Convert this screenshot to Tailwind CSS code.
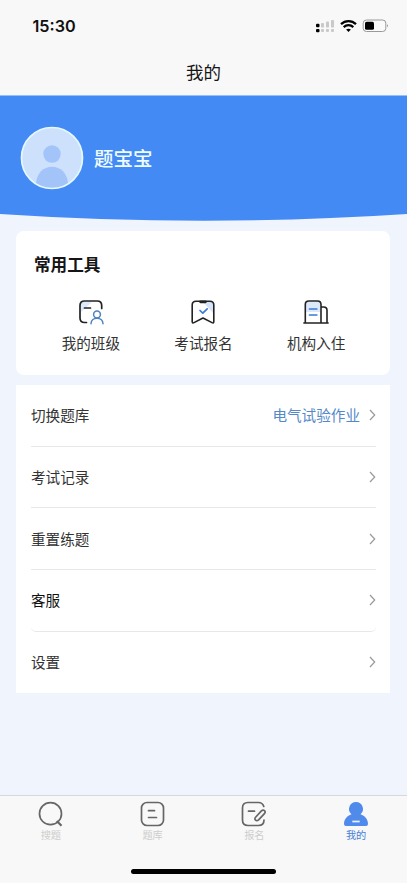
<!DOCTYPE html>
<html lang="zh-CN">
<head>
<meta charset="utf-8">
<meta name="viewport" content="width=device-width, initial-scale=1">
<title>我的</title>
<script src="https://cdn.jsdelivr.net/npm/@tailwindcss/browser@4"></script>
</head>
<body class="font-['Noto_Sans_CJK_SC',sans-serif] bg-[#f0f4fd]">
<div class="w-[407px] h-[883px] flex flex-col overflow-hidden bg-[#f0f4fd]">
  <header class="h-[95px] shrink-0 bg-[#f8f8f8]">
    <div class="h-[52px] flex items-center justify-between pl-[32.500px] pr-[18px]">
      <span class="font-['Inter',sans-serif] font-semibold text-[16.200px] leading-5 text-[#111]">15:30</span>
      <div class="flex items-center gap-[5px]">
        <svg class="w-[20px] h-[14px]" viewBox="0 0 20 14">
          <g fill="#c9c9c9"><rect x="6" y="4" width="3" height="4.5" rx=".8"/><rect x="11" y="2.5" width="3" height="6" rx=".8"/><rect x="16" y="1" width="3" height="7.5" rx=".8"/><rect x="6" y="10" width="3" height="3" rx="1"/><rect x="11" y="10" width="3" height="3" rx="1"/><rect x="16" y="10" width="3" height="3" rx="1"/></g>
          <g fill="#000"><rect x="1" y="4.8" width="3.5" height="3.5" rx="1"/><rect x="1" y="10" width="3.5" height="3.2" rx="1"/></g>
        </svg>
        <svg class="w-[17px] h-[14px]" viewBox="0 0 17 14" fill="none" stroke="#000" stroke-width="2.2">
          <path d="M1 5.1C5.2 1 11.8 1 16 5.1"/><path d="M3.7 8.1c2.7-2.6 6.9-2.6 9.6 0"/><path d="M6.1 10.6c1.4-1.2 3.4-1.2 4.8 0L8.500 13z" fill="#000" stroke="none"/>
        </svg>
        <svg class="w-[27px] h-[14px]" viewBox="0 0 27 14">
          <rect x="1.200" y="1" width="22.600" height="11.500" rx="3.200" fill="#fbfbfb" stroke="#999"/><rect x="3" y="2.800" width="9" height="8" rx="1.600"/><path d="M25 5v3.600q1.600-1.800 0-3.600" fill="#777"/>
        </svg>
      </div>
    </div>
    <h1 class="h-10 text-center text-[17.500px] leading-[39px] text-[#151515]">我的</h1>
  </header>

  <section class="relative h-[136px] shrink-0">
    <svg class="absolute left-0 top-0 w-[407px] h-[127px]" viewBox="0 0 407 127"><path d="M0 .5H407V119Q203.500 132.500 0 119Z" fill="#438af5"/></svg>
    <div class="relative flex items-center pl-5 pt-[31px] gap-[10px]">
      <svg class="w-16 h-16" viewBox="0 0 64 64">
        <defs><clipPath id="avatar"><circle cx="32" cy="32" r="30"/></clipPath></defs>
        <circle cx="32" cy="32" r="30.500" fill="#cde0fc"/>
        <g clip-path="url(#avatar)" fill="#a2c4f8"><circle cx="32" cy="28" r="8.700"/><path d="M16 59C16 34.500 48 34.500 48 59Q32 66 16 59Z"/></g>
        <circle cx="32" cy="32" r="30.500" fill="none" stroke="#e4f8ff" stroke-width="1.700"/>
      </svg>
      <span class="text-[19.500px] leading-7 font-medium text-[#eefcff]">题宝宝</span>
    </div>
  </section>

  <section class="mx-4 w-[374px] h-[143.500px] shrink-0 rounded-lg bg-white pt-[20px]">
    <h2 class="pl-[18px] text-[16.600px] leading-[26px] font-bold text-[#151515]">常用工具</h2>
    <div class="grid grid-cols-3 ml-[18.500px] mr-[17.500px] mt-[22px] text-[14.600px] leading-5 text-[#333]">
      <div class="flex flex-col items-center gap-2">
        <svg class="w-[26px] h-[26px]" viewBox="0 0 26 26" fill="none" stroke-width="1.700" stroke-linecap="round">
          <path d="M3 3h11L3 13z" fill="#dce9fb"/>
          <path d="M23.700 9.500V6.500Q23.700 2 19.200 2H6.500Q2 2 2 6.500v12.500q0 4.500 4.500 4.500h2" stroke="#222"/>
          <path d="M6.500 9h6" stroke="#222"/>
          <g stroke="#4c83bf" stroke-width="1.500"><circle cx="19" cy="15.500" r="3.400"/><path d="M13 24.800c0-7.400 12-7.400 12 0"/></g>
        </svg>
        <span>我的班级</span>
      </div>
      <div class="flex flex-col items-center gap-2">
        <svg class="w-[26px] h-[26px]" viewBox="0 0 26 26" fill="none" stroke-linejoin="round" stroke-linecap="round">
          <path d="M13 3h10v11z" fill="#d3e4fb"/>
          <path d="M6 2.300h14q3.800 0 3.800 3.800v16.500q0 2-1.800 1L13 19l-9 4.600q-1.800 1-1.800-1V6.100Q2.200 2.300 6 2.300Z" stroke="#222" stroke-width="1.600"/>
          <path d="M10.500 2.800h5" stroke="#222" stroke-width="2.700"/>
          <path d="M10 11.500l2.800 2.700 4.400-4.400" stroke="#397bd5" stroke-width="1.700"/>
        </svg>
        <span>考试报名</span>
      </div>
      <div class="flex flex-col items-center gap-2">
        <svg class="w-[26px] h-[26px]" viewBox="0 0 26 26" fill="none" stroke="#222" stroke-width="1.600" stroke-linecap="round">
          <path d="M3 3h14v10H3z" fill="#dce9fb" stroke="none"/>
          <path d="M2.300 23.500V5.500Q2.300 2 5.800 2h8.700Q18 2 18 5.500v18M18 8h2.700q3.300 0 3.300 3.300v12.200M.9 24h24.200"/>
          <path d="M6.500 10h7.300M6.500 16h7.300" stroke="#397bd5" stroke-width="1.700"/>
        </svg>
        <span>机构入住</span>
      </div>
    </div>
  </section>

  <nav class="mx-4 mt-[10px] w-[374px] h-[308px] shrink-0 bg-white pl-[15px] pr-[14px] flex flex-col text-[14.600px] leading-5 text-[#333]">
    <a class="h-[62px] shrink-0 flex items-center border-b border-[#e8e8e8]"><span>切换题库</span><span class="ml-auto mr-[9px] text-[#5489c8]">电气试验作业</span><svg class="w-[7px] h-[12px]" viewBox="0 0 7 12" fill="none" stroke="#999" stroke-width="1.200"><path d="M1 1l4.700 5L1 11"/></svg></a>
    <a class="h-[61.700px] shrink-0 flex items-center justify-between border-b border-[#e8e8e8]"><span>考试记录</span><svg class="w-[7px] h-[12px]" viewBox="0 0 7 12" fill="none" stroke="#999" stroke-width="1.200"><path d="M1 1l4.700 5L1 11"/></svg></a>
    <a class="h-[61.700px] shrink-0 flex items-center justify-between border-b border-[#e8e8e8]"><span>重置练题</span><svg class="w-[7px] h-[12px]" viewBox="0 0 7 12" fill="none" stroke="#999" stroke-width="1.200"><path d="M1 1l4.700 5L1 11"/></svg></a>
    <a class="h-[61.700px] shrink-0 flex items-center justify-between border-b border-[#e8e8e8] rounded-b-[5px] text-[#111]"><span>客服</span><svg class="w-[7px] h-[12px]" viewBox="0 0 7 12" fill="none" stroke="#999" stroke-width="1.200"><path d="M1 1l4.700 5L1 11"/></svg></a>
    <a class="h-[60.900px] shrink-0 flex items-center justify-between"><span>设置</span><svg class="w-[7px] h-[12px]" viewBox="0 0 7 12" fill="none" stroke="#999" stroke-width="1.200"><path d="M1 1l4.700 5L1 11"/></svg></a>
  </nav>

  <footer class="mt-auto h-[88px] shrink-0 border-t border-[#d8d8dc] bg-[#f8f8f8] flex flex-col items-center">
    <div class="grid grid-cols-4 w-full pt-[5px] text-[10.200px] leading-[14px] text-[#cdcdcd]">
      <div class="flex flex-col items-center gap-px">
        <svg class="w-[26px] h-[26px]" viewBox="0 0 26 26" fill="none" stroke="#666" stroke-width="1.700"><circle cx="12.500" cy="12.700" r="11"/><path d="M18.800 20l4.700 4.700" stroke-width="2.200"/></svg>
        <span>搜题</span>
      </div>
      <div class="flex flex-col items-center gap-px">
        <svg class="w-[26px] h-[26px]" viewBox="0 0 26 26" fill="none" stroke="#666" stroke-width="1.700" stroke-linecap="round"><rect x="1.500" y="1.500" width="22" height="23" rx="5.500"/><path d="M8.500 9.700h6M8.500 16.500h8"/></svg>
        <span>题库</span>
      </div>
      <div class="flex flex-col items-center gap-px">
        <svg class="w-[26px] h-[26px]" viewBox="0 0 26 26" fill="none" stroke="#666" stroke-width="1.700" stroke-linecap="round"><path d="M22.800 5.500Q21.500 1.500 17.500 1.500H7Q1.500 1.500 1.500 7v12q0 5.500 5.500 5.500h10.500q5.500 0 5.500-5.500M7.500 10.200h6"/><path d="M14.600 16.300l5.800-6.400c2.200-2 5 .4 3 2.800l-5.800 6.200c-2.200 2-5-.4-3-2.600Z"/></svg>
        <span>报名</span>
      </div>
      <div class="flex flex-col items-center gap-px text-[#4780d5]">
        <svg class="w-[26px] h-[26px]" viewBox="0 0 26 26" fill="#508bec"><path d="M13 1a7 7 0 0 1 4.500 12.300C22 14.700 25 18.500 25 23q0 2-2 2H3q-2 0-2-2c0-4.500 3-8.300 7.500-9.700A7 7 0 0 1 13 1Z"/><path d="M9.300 20.500h7.400" stroke="#e8f2ff" stroke-width="1.700"/></svg>
        <span>我的</span>
      </div>
    </div>
    <div class="mt-[27px] w-[145px] h-[5px] rounded-full bg-black"></div>
  </footer>
</div>
</body>
</html>
